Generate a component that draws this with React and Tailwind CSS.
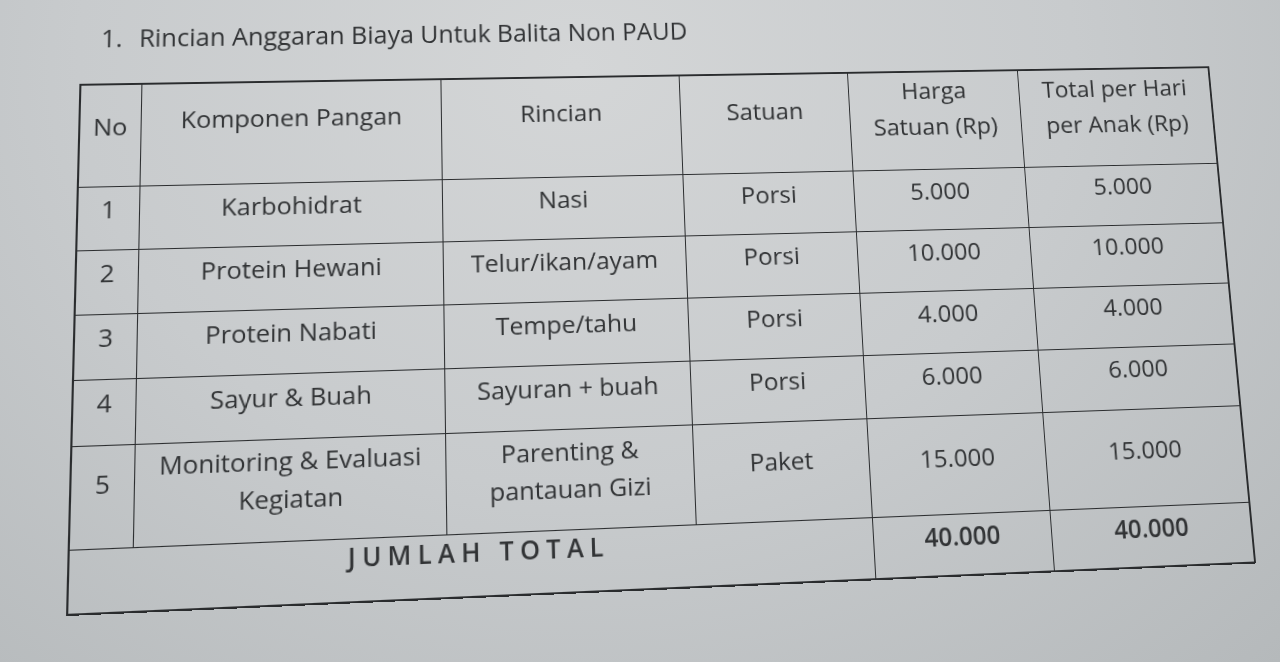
import React from "react";

const rows = [
  { no: "1", komponen: ["Karbohidrat"], rincian: ["Nasi"], satuan: "Porsi", harga: "5.000", total: "5.000" },
  { no: "2", komponen: ["Protein Hewani"], rincian: ["Telur/ikan/ayam"], satuan: "Porsi", harga: "10.000", total: "10.000" },
  { no: "3", komponen: ["Protein Nabati"], rincian: ["Tempe/tahu"], satuan: "Porsi", harga: "4.000", total: "4.000" },
  { no: "4", komponen: ["Sayur & Buah"], rincian: ["Sayuran + buah"], satuan: "Porsi", harga: "6.000", total: "6.000" },
  { no: "5", komponen: ["Monitoring & Evaluasi", "Kegiatan"], rincian: ["Parenting &", "pantauan Gizi"], satuan: "Paket", harga: "15.000", total: "15.000", tall: true },
];

const cell = "border border-[#2a2c2e] text-center align-middle px-2";

const App = () => {
  return (
    <div className="w-[1280px] h-[662px] overflow-hidden bg-[radial-gradient(ellipse_at_45%_10%,#d4d6d7_0%,#c8cbcd_50%,#b5b9bb_100%)] font-['Open_Sans'] text-[#313335]">
      <div className="pt-[7px] pl-[90px] origin-center [transform:perspective(1000px)_rotateX(6deg)_rotateY(3deg)_rotateZ(-1.9deg)]">
        <h1 className="text-[25px] leading-[30px] pl-[20px] flex gap-[16px]">
          <span>1.</span>
          <span>Rincian Anggaran Biaya Untuk Balita Non PAUD</span>
        </h1>
        <table className="mt-[32px] border-collapse border-2 border-[#2a2c2e] text-[24.5px] leading-[36px]">
          <colgroup>
            <col className="w-[59px]" />
            <col className="w-[295px]" />
            <col className="w-[242px]" />
            <col className="w-[175px]" />
            <col className="w-[180px]" />
            <col className="w-[207px]" />
          </colgroup>
          <thead>
            <tr className="h-[101px]">
              <th className={cell + " font-medium pb-[18px]"}>No</th>
              <th className={cell + " font-medium pb-[30px]"}>Komponen Pangan</th>
              <th className={cell + " font-medium pb-[30px]"}>Rincian</th>
              <th className={cell + " font-medium pb-[26px]"}>Satuan</th>
              <th className={cell + " font-medium leading-[38px] pb-[26px]"}>
                Harga
                <br />
                Satuan (Rp)
              </th>
              <th className={cell + " font-medium leading-[38px] pb-[24px]"}>
                Total per Hari
                <br />
                per Anak (Rp)
              </th>
            </tr>
          </thead>
          <tbody>
            {rows.map((r) => (
              <tr key={r.no} className={r.tall ? "h-[97px]" : "h-[63px]"}>
                <td className={cell + (r.tall ? " pb-[24px]" : " pb-[18px]")}>{r.no}</td>
                <td className={cell + (r.tall ? " pb-[20px]" : " pb-[18px]")}>
                  {r.komponen.map((t) => (
                    <div key={t}>{t}</div>
                  ))}
                </td>
                <td className={cell + (r.tall ? " pb-[18px]" : " pb-[18px]")}>
                  {r.rincian.map((t) => (
                    <div key={t}>{t}</div>
                  ))}
                </td>
                <td className={cell + (r.tall ? " pb-[20px]" : " pb-[18px]")}>{r.satuan}</td>
                <td className={cell + (r.tall ? " pb-[14px]" : " pb-[18px]")}>{r.harga}</td>
                <td className={cell + (r.tall ? " pb-[16px]" : " pb-[20px]")}>{r.total}</td>
              </tr>
            ))}
            <tr className="h-[59px] font-semibold">
              <td colSpan={4} className={cell + " align-top pt-[3px] leading-[28px] tracking-[6px]"}>
                JUMLAH TOTAL
              </td>
              <td className={cell + " align-top pt-[3px]"}>40.000</td>
              <td className={cell + " align-top pt-[3px]"}>40.000</td>
            </tr>
          </tbody>
        </table>
      </div>
    </div>
  );
};

export default App;
